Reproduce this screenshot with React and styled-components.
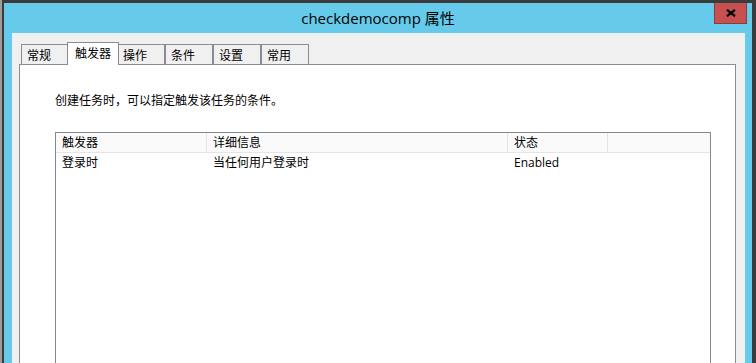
import styled, { createGlobalStyle } from "styled-components";

const GlobalStyle = createGlobalStyle`
  html, body {
    margin: 0;
    padding: 0;
    overflow: hidden;
    background: #9d9d9d;
  }

  body {
    font-family: "Open Sans", "Noto Sans CJK SC", sans-serif;
    font-size: 12px;
    color: #000;
  }

  * {
    box-sizing: border-box;
  }
`;

const Desktop = styled.div`
  width: 756px;
  height: 363px;
  display: flex;
  padding-left: 2px;
  background: #9d9d9d;
  overflow: hidden;
`;

const Window = styled.div`
  flex: 1;
  display: flex;
  flex-direction: column;
  background: #66cbea;
  border-top: 3px solid #3b3b3b;
  border-left: 2px solid #3b3b3b;
  border-right: 4px solid #3b3b3b;
`;

const TitleBar = styled.div`
  height: 30px;
  flex: none;
  display: grid;
  grid-template-columns: 1fr auto 1fr;
  align-items: start;
`;

const Title = styled.div`
  grid-column: 2;
  line-height: 30px;
  font-size: 15px;
  white-space: nowrap;
`;

const CloseButton = styled.div`
  grid-column: 3;
  justify-self: end;
  margin-right: 5px;
  width: 33px;
  height: 21px;
  background: #c75050;
  border: 1px solid #8a3c3c;
  border-top: none;
  display: flex;
  align-items: center;
  justify-content: center;
`;

const Client = styled.div`
  flex: none;
  height: 400px;
  margin: 0 7px 0 8px;
  padding: 9px 9px 0 7px;
  background: #f0f0f0;
  display: flex;
  flex-direction: column;
`;

const TabRow = styled.div`
  display: flex;
  align-items: flex-end;
  height: 22px;
  padding-left: 2px;
`;

const Tab = styled.div`
  position: relative;
  flex: none;
  width: ${(p) => (p.$active ? "52px" : "48px")};
  height: ${(p) => (p.$active ? "23px" : "20px")};
  margin: ${(p) => (p.$active ? "0 -2px -1px" : "0")};
  padding: ${(p) => (p.$active ? "0 0 2px 7px" : "0 0 0 5px")};
  border: 1px solid #898c95;
  border-bottom: none;
  background: ${(p) => (p.$active ? "#fff" : "#f0f0f0")};
  z-index: ${(p) => (p.$active ? 2 : 1)};
  display: flex;
  align-items: center;
  white-space: nowrap;
`;

const Panel = styled.div`
  flex: 1;
  background: #fff;
  border: 1px solid #898c95;
  padding: 28px 24px 0 35px;
`;

const Description = styled.p`
  margin: 0;
  line-height: 16px;
`;

const ListBox = styled.div`
  margin-top: 23px;
  height: 300px;
  border: 1px solid #828790;
  background: #fff;
`;

const HeaderRow = styled.div`
  display: flex;
  height: 20px;
  background: #fafafa;
  border-bottom: 1px solid #e5e5e5;
`;

const HeaderCell = styled.div`
  width: ${(p) => p.$w}px;
  padding-left: 6px;
  line-height: 19px;
  border-right: 1px solid #e5e5e5;
  white-space: nowrap;
`;

const Row = styled.div`
  display: flex;
  height: 19px;
`;

const Cell = styled.div`
  width: ${(p) => p.$w}px;
  padding-left: 6px;
  line-height: 19px;
  white-space: nowrap;
`;

const tabs = ["常规", "触发器", "操作", "条件", "设置", "常用"];
const columns = [
  { title: "触发器", w: 151 },
  { title: "详细信息", w: 301 },
  { title: "状态", w: 100 },
];
const rows = [["登录时", "当任何用户登录时", "Enabled"]];

export default function App() {
  return (
    <>
      <GlobalStyle />
      <Desktop>
        <Window>
          <TitleBar>
            <Title>checkdemocomp 属性</Title>
            <CloseButton>
              <svg width="10" height="8" viewBox="0 0 10 8">
                <path
                  d="M1 0.8 L9 7.2 M9 0.8 L1 7.2"
                  stroke="#000"
                  strokeWidth="2.2"
                  fill="none"
                />
              </svg>
            </CloseButton>
          </TitleBar>
          <Client>
            <TabRow>
              {tabs.map((t) => (
                <Tab key={t} $active={t === "触发器"}>
                  {t}
                </Tab>
              ))}
            </TabRow>
            <Panel>
              <Description>创建任务时，可以指定触发该任务的条件。</Description>
              <ListBox>
                <HeaderRow>
                  {columns.map((c) => (
                    <HeaderCell key={c.title} $w={c.w}>
                      {c.title}
                    </HeaderCell>
                  ))}
                </HeaderRow>
                {rows.map((r) => (
                  <Row key={r[0]}>
                    {r.map((v, i) => (
                      <Cell key={i} $w={columns[i].w}>
                        {v}
                      </Cell>
                    ))}
                  </Row>
                ))}
              </ListBox>
            </Panel>
          </Client>
        </Window>
      </Desktop>
    </>
  );
}
